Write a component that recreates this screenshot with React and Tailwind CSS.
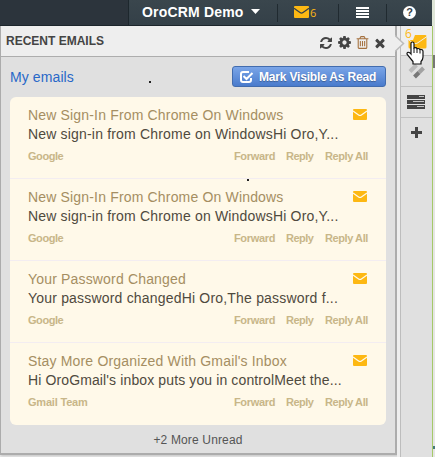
import React from "react";

const paths = {
  refresh:
    "M1639 1056q0 5-1 7-64 268-268 434.5t-478 166.5q-146 0-282.5-55t-243.5-157l-129 129q-19 19-45 19t-45-19-19-45v-448q0-26 19-45t45-19h448q26 0 45 19t19 45-19 45l-137 137q71 66 161 102t187 36q134 0 250-65t186-179q11-17 53-117 8-23 30-23h192q13 0 22.5 9.5t9.5 22.5zm25-800v448q0 26-19 45t-45 19h-448q-26 0-45-19t-19-45 19-45l138-138q-148-137-349-137-134 0-250 65t-186 179q-11 17-53 117-8 23-30 23h-199q-13 0-22.5-9.5t-9.5-22.5v-7q65-268 270-434.5t480-166.5q146 0 284 55.5t245 156.5l130-129q19-19 45-19t45 19 19 45z",
  cog: "M1152 896q0-106-75-181t-181-75-181 75-75 181 75 181 181 75 181-75 75-181zm512-109v222q0 12-8 23t-20 13l-185 28q-19 54-39 91 35 50 107 138 10 12 10 25t-9 23q-27 37-99 108t-94 71q-12 0-26-9l-138-108q-44 23-91 38-16 136-29 186-7 28-36 28h-222q-14 0-24.5-8.5t-11.5-21.5l-28-184q-49-16-90-37l-141 107q-10 9-25 9-14 0-25-11-126-114-165-168-7-10-7-23 0-12 8-23 15-21 51-66.5t54-70.5q-27-50-41-99l-183-27q-13-2-21-12.5t-8-23.5v-222q0-12 8-23t19-13l186-28q14-46 39-92-40-57-107-138-10-12-10-24 0-10 9-23 26-36 98.5-107.5t94.5-71.5q13 0 26 10l138 107q44-23 91-38 16-136 29-186 7-28 36-28h222q14 0 24.5 8.5t11.5 21.5l28 184q49 16 90 37l142-107q9-9 24-9 13 0 25 10 129 119 165 170 7 8 7 22 0 12-8 23-15 21-51 66.5t-54 70.5q26 50 41 98l183 28q13 2 21 12.5t8 23.5z",
  trash:
    "M704 736v576q0 14-9 23t-23 9h-64q-14 0-23-9t-9-23v-576q0-14 9-23t23-9h64q14 0 23 9t9 23zm256 0v576q0 14-9 23t-23 9h-64q-14 0-23-9t-9-23v-576q0-14 9-23t23-9h64q14 0 23 9t9 23zm256 0v576q0 14-9 23t-23 9h-64q-14 0-23-9t-9-23v-576q0-14 9-23t23-9h64q14 0 23 9t9 23zm128 724v-948h-896v948q0 22 7 40.5t14.5 27 10.5 8.5h832q3 0 10.5-8.5t14.5-27 7-40.5zm-672-1076h448l-48-117q-7-9-17-11h-317q-10 2-17 11zm928 32v64q0 14-9 23t-23 9h-96v948q0 83-47 143.5t-113 60.5h-832q-66 0-113-58.5t-47-141.5v-952h-96q-14 0-23-9t-9-23v-64q0-14 9-23t23-9h309l70-167q15-37 54-63t79-26h320q40 0 79 26t54 63l70 167h309q14 0 23 9t9 23z",
  times:
    "M1490 1322q0 40-28 68l-136 136q-28 28-68 28t-68-28l-294-294-294 294q-28 28-68 28t-68-28l-136-136q-28-28-28-68t28-68l294-294-294-294q-28-28-28-68t28-68l136-136q28-28 68-28t68 28l294 294 294-294q28-28 68-28t68 28l136 136q28 28 28 68t-28 68l-294 294 294 294q28 28 28 68z",
};

function Glyph({ name, className }) {
  return (
    <svg viewBox="0 0 1792 1792" className={className} fill="currentColor">
      <path d={paths[name]} />
    </svg>
  );
}

function Envelope({ className, line = "#fff9e9" }) {
  return (
    <svg viewBox="0 0 14 11" preserveAspectRatio="none" className={className}>
      <rect width="14" height="11" rx="1" fill="#fdb813" />
      <path d="M0 2 5.6 6Q7 7 8.4 6L14 2" fill="none" stroke={line} strokeWidth="1.2" />
    </svg>
  );
}

const emails = [
  { title: "New Sign-In From Chrome On Windows", body: "New sign-in from Chrome on WindowsHi Oro,Y...", from: "Google", fit: "tracking-[0.18px]", fromFit: "tracking-[-0.45px]" },
  { title: "New Sign-In From Chrome On Windows", body: "New sign-in from Chrome on WindowsHi Oro,Y...", from: "Google", fit: "tracking-[0.18px]", fromFit: "tracking-[-0.45px]" },
  { title: "Your Password Changed", body: "Your password changedHi Oro,The password f...", from: "Google", fit: "tracking-[0.19px]", fromFit: "tracking-[-0.45px]" },
  { title: "Stay More Organized With Gmail's Inbox", body: "Hi OroGmail's inbox puts you in controlMeet the...", from: "Gmail Team", fit: "tracking-[0.12px]", fromFit: "tracking-[-0.2px]" },
];

function Email({ mail, last }) {
  return (
    <li className={`h-[82px] pl-[18px] pr-[18px] pt-[9px] ${last ? "" : "border-b border-[#f3edf1]"}`}>
      <div className="flex h-[19px] items-center justify-between">
        <span className="whitespace-nowrap text-[14px] leading-[19px] tracking-[0.17px] text-[#a58e62]">{mail.title}</span>
        <Envelope className="mr-px -mt-[2px] h-[11px] w-[14px]" />
      </div>
      <p className={`whitespace-nowrap text-[14px] leading-[19px] text-[#4f4a3e] ${mail.fit}`}>{mail.body}</p>
      <div className="mt-[5px] flex h-[14px] whitespace-nowrap text-[11px] font-bold leading-[14px] text-[#c8b688]">
        <span className={`w-[206px] ${mail.fromFit}`}>{mail.from}</span>
        <span className="w-[52px] tracking-[-0.3px]">Forward</span>
        <span className="w-[39px] tracking-[-0.5px]">Reply</span>
        <span className="tracking-[-0.4px]">Reply All</span>
      </div>
    </li>
  );
}

function TopBar() {
  return (
    <header className="flex h-[26px] w-[432px] items-center border-b border-[#1d262c] bg-[#2c343c] pl-[128px]">
      <div className="flex h-[25px] flex-1 items-center border-l border-[#1d272d] bg-linear-to-b from-[#3a464d] to-[#344048]">
        <span className="-mt-[2px] ml-[13px] w-[109px] whitespace-nowrap text-[14px] font-bold leading-[22px] tracking-[0.18px] text-white">OroCRM Demo</span>
        <svg viewBox="0 0 9 5" className="-mt-[2px] h-[5px] w-[9px]"><path d="M0 0h9L4.5 5z" fill="#fff" /></svg>
        <i className="ml-[17px] h-[18px] w-px bg-[#202a30]" />
        <Envelope line="#354148" className="-mt-px ml-[16px] h-[12px] w-[15px]" />
        <span className="ml-px w-[28px] text-[11px] leading-[14px] text-[#fdb813] font-['Open_Sans',sans-serif]">6</span>
        <i className="h-[18px] w-px bg-[#202a30]" />
        <svg viewBox="0 0 13 11" className="-mt-px ml-[17px] h-[11px] w-[13px]"><path d="M0 1h13M0 4h13M0 7h13M0 10h13" stroke="#fff" strokeWidth="2" /></svg>
        <i className="ml-[17px] h-[18px] w-px bg-[#202a30]" />
        <span className="-mt-px ml-[16px] flex h-[13px] w-[13px] items-center justify-center rounded-full bg-white text-[11px] font-bold leading-[13px] text-[#344048]">?</span>
      </div>
    </header>
  );
}

function Rail() {
  return (
    <aside className="relative flex w-[32px] flex-col border-l border-[#bdbdbd] bg-[#e0e0e0]">
      <div className="h-[30px] border-b border-[#c2c2c2] bg-[#eee]" />
      <div className="flex h-[31px] items-center border-b border-[#c2c2c2] pl-[7px]">
        <svg viewBox="0 0 17 16" className="h-[16px] w-[17px]">
          <path d="M2 8.5 8.5 2" stroke="#bbb" strokeWidth="4" />
          <path d="M6.5 14 11 9.500" stroke="#777" strokeWidth="4" />
          <path d="M11 9.500 15.500 5" stroke="#a2a2a2" strokeWidth="4" />
        </svg>
      </div>
      <div className="flex h-[31px] items-center border-b border-[#c2c2c2] pl-[6px]">
        <svg viewBox="0 0 18 14" className="h-[14px] w-[18px]">
          <path d="M0 0h18v4H0zM0 5h18v4H0zM0 10h18v4H0z" fill="#444" />
          <path d="M12 1.5h5M6 6.5h11M10 11.5h7" stroke="#c4c4c4" />
        </svg>
      </div>
      <div className="flex h-[28px] items-center pl-[10px]">
        <svg viewBox="0 0 11 11" className="h-[11px] w-[11px]"><path d="M5.5 0v11M0 5.5h11" stroke="#444" strokeWidth="3" /></svg>
      </div>
      <svg viewBox="0 0 34 46" className="absolute -left-[6px] top-0 h-[46px] w-[34px]">
        <path d="M0 9.5 8.5 17.5 0 25.5z" fill="#eee" />
        <path d="M0 9.5 8.5 17.5 0 25.5" fill="none" stroke="#bbb" strokeWidth="1.5" />
        <path d="M20 9h10q1.5 0 1.5 1v11q0 1.5-1.5 1.5H15q-1.5 0-1.5-1.5V14H18z" fill="#fdb813" />
        <path d="M14 14q6 6 10 2l8-5.5" stroke="#eee" fill="none" />
      </svg>
      <span className="absolute left-[4px] top-px text-[12px] leading-[14px] text-[#fdb813] font-['Open_Sans',sans-serif]">6</span>
      <svg viewBox="0 0 18 24" className="absolute left-[5px] top-[15px] h-[24px] w-[18px]">
        <path d="M5 13V2.5Q5 1 6.5 1T8 2.5V7q2.5-.8 3 .7 2.2-.6 2.8.8Q17 8.2 17 10.5V16q0 2.5-2 4.5V23H7v-2.5Q4.5 17.5 1.2 13.5.5 11.8 2 11.3 3.5 11 5 13z" fill="#fff" stroke="#111" strokeWidth="1.2" />
        <path d="M8 7v5M11 8v4M14 9v3.5" stroke="#111" />
      </svg>
    </aside>
  );
}

export default function App() {
  return (
    <div className="relative h-[457px] w-[435px] overflow-hidden bg-[#dfe6d8] font-['Liberation_Sans',Arial,sans-serif]">
      <TopBar />
      <div className="flex h-[431px] bg-[#e8e8e8]">
        <main className="flex h-[429px] w-[397px] shrink-0 flex-col border-b-2 border-l border-r-2 border-[#acacac] bg-[#e0e0e0] shadow-[1px_1px_2px_rgba(0,0,0,0.15)]">
          <div className="flex h-[31px] items-center border-b border-[#adadad] bg-[#eee] pl-[5px] text-[#444]">
            <h1 className="w-[313px] whitespace-nowrap text-[12px] font-bold leading-[16px]">RECENT EMAILS</h1>
            <Glyph name="refresh" className="mt-[3px] h-[14px] w-[14px]" />
            <Glyph name="cog" className="ml-[4px] mt-[3px] h-[15px] w-[15px]" />
            <Glyph name="trash" className="ml-[3px] mt-[2px] h-[15px] w-[15px] text-[#a5713f]" />
            <Glyph name="times" className="ml-[3px] mt-[3px] h-[14px] w-[14px]" />
          </div>
          <div className="flex h-[40px] items-center pl-[9px]">
            <span className="w-[139px] shrink-0 text-[14px] leading-[20px] tracking-[0.1px] text-[#2868c8]">My emails</span>
            <div className="mt-[10px] h-[2px] w-[2px] shrink-0 bg-[#222]" />
            <button className="-mt-px ml-[81px] flex h-[21px] w-[154px] shrink-0 items-center whitespace-nowrap rounded-[3px] border border-[#426cae] bg-linear-to-b from-[#7aa5e8] to-[#4a7bcc] pl-[7px] text-[12px] font-bold tracking-[-0.18px] text-white text-shadow-[0_1px_1px_rgba(0,0,0,0.3)]">
              <svg viewBox="0 0 14 12" className="mr-[5px] h-[12px] w-[14px]"><path d="M11 7v2q0 2-2 2H3q-2 0-2-2V3q0-2 2-2h6M3.5 5l3 3 6-6" fill="none" stroke="#fff" strokeWidth="2" /></svg>
              Mark Visible As Read
            </button>
          </div>
          <ul className="ml-[9px] h-[328px] w-[376px] overflow-hidden rounded-[6px] bg-[#fff9e9]">
            {emails.map((mail, i) => <Email key={i} mail={mail} last={i === 3} />)}
          </ul>
          <div className="mt-[7px] text-center text-[12px] leading-[16px] tracking-[0.15px] text-[#555]">+2 More Unread</div>
        </main>
        <div className="w-[3px] bg-[#eee]" />
        <Rail />
        <div className="flex w-[3px] flex-col border-l border-[#a5c969] bg-[#e6e6e6]">
          <i className="mt-[29px] h-[13px] bg-[#777]" />
          <i className="mt-[378px] h-[3px] bg-[#47797c]" />
        </div>
      </div>
      <i className="absolute left-[247px] top-[179px] h-[2px] w-[2px] bg-[#222]" />
    </div>
  );
}
